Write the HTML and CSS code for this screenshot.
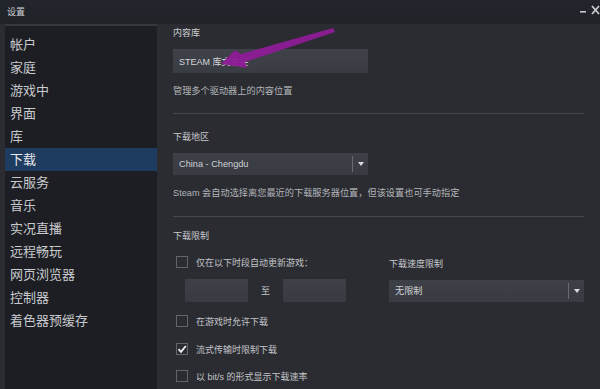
FILE: index.html
```html
<!DOCTYPE html>
<html lang="zh-CN">
<head>
    <meta charset="UTF-8">
    <meta name="viewport" content="width=device-width, initial-scale=1.0">
    <title>设置</title>
    <link rel="stylesheet" href="styles.css">
</head>
<body>
    <div class="window">
        <header class="titlebar">
            <span class="title">设置</span>
            <div class="controls">
                <svg width="7" height="10" viewBox="0 0 7 10"><rect x="0" y="6" width="6" height="1.6" fill="#c9cbcf"/></svg>
                <svg width="9" height="10" viewBox="0 0 9 10"><path d="M1 1 L8 9 M8 1 L1 9" stroke="#c9cbcf" stroke-width="1.8"/></svg>
            </div>
        </header>

        <div class="layout">
            <nav class="sidebar">
                <a class="nav-item">帐户</a>
                <a class="nav-item">家庭</a>
                <a class="nav-item">游戏中</a>
                <a class="nav-item">界面</a>
                <a class="nav-item">库</a>
                <a class="nav-item active">下载</a>
                <a class="nav-item">云服务</a>
                <a class="nav-item">音乐</a>
                <a class="nav-item">实况直播</a>
                <a class="nav-item">远程畅玩</a>
                <a class="nav-item">网页浏览器</a>
                <a class="nav-item">控制器</a>
                <a class="nav-item">着色器预缓存</a>
            </nav>

            <main class="content">
                <section>
                    <div class="label">内容库</div>
                    <button class="btn">STEAM 库文件夹</button>
                    <p class="hint">管理多个驱动器上的内容位置</p>
                </section>

                <hr class="sep">

                <section>
                    <div class="label section-label">下载地区</div>
                    <div class="select">
                        <span>China - Chengdu</span>
                        <span class="caret"></span>
                    </div>
                    <p class="hint">Steam 会自动选择离您最近的下载服务器位置，但该设置也可手动指定</p>
                </section>

                <hr class="sep sep-2">

                <section>
                    <div class="label label-limit">下载限制</div>
                    <div class="limits">
                        <div class="limits-left">
                            <label class="check"><span class="box"></span>仅在以下时段自动更新游戏：</label>
                            <div class="times">
                                <span class="time-box"></span>
                                <span class="to">至</span>
                                <span class="time-box"></span>
                            </div>
                        </div>
                        <div class="limits-right">
                            <div class="label speed-label">下载速度限制</div>
                            <div class="select">
                                <span>无限制</span>
                                <span class="caret"></span>
                            </div>
                        </div>
                    </div>
                    <label class="check row-first"><span class="box"></span>在游戏时允许下载</label>
                    <label class="check row"><span class="box checked">
                        <svg width="10" height="10" viewBox="0 0 10 10"><path d="M1.5 5.2 L4 7.8 L8.8 2" fill="none" stroke="#f2f2f2" stroke-width="1.8"/></svg>
                    </span>流式传输时限制下载</label>
                    <label class="check row row-last"><span class="box"></span>以 bit/s 的形式显示下载速率</label>
                </section>
            </main>
        </div>

        <!-- annotation arrow drawn over the screenshot -->
        <svg class="annotation" width="600" height="389" viewBox="0 0 600 389">
            <polygon points="221,64 235,50 241,54 333,28 335,32 245,62 247,68" fill="#8d1b96" opacity="0.95"/>
        </svg>
    </div>
</body>
</html>
```

FILE: styles.css
```css
* {
    margin: 0;
    padding: 0;
    box-sizing: border-box;
}

body {
    background: #2a2c31;
    color: #c6c8cc;
    font-family: "Liberation Sans", "Noto Sans CJK SC", sans-serif;
    overflow: hidden;
}

.window {
    position: relative;
    width: 600px;
    height: 389px;
    display: flex;
    flex-direction: column;
    overflow: hidden;
}

.titlebar {
    flex-shrink: 0;
    height: 24px;
    background: linear-gradient(#22252c, #1f2227);
    display: flex;
    justify-content: space-between;
    align-items: center;
    padding: 0 0 2px 7px;
}

.title {
    font-size: 9px;
    color: #d0d2d6;
}

.controls {
    display: flex;
    align-items: center;
    gap: 4px;
    margin-bottom: 3px;
}

.layout {
    flex: 1;
    min-height: 0;
    display: flex;
}

.sidebar {
    width: 152px;
    margin-left: 5px;
    background: #1c1e23;
    border-top: 2px solid #35383e;
    padding-top: 7px;
    display: flex;
    flex-direction: column;
}

.nav-item {
    height: 23px;
    line-height: 23px;
    padding-left: 5px;
    font-size: 13px;
    color: #c8cace;
}

.nav-item.active {
    background: #1e3c5f;
    color: #e6e8ec;
}

.content {
    flex: 1;
    padding: 2px 16px 0 16px;
}

.label {
    font-size: 9px;
    line-height: 14px;
    color: #c8cace;
}

.section-label {
    margin-top: 16px;
}

.label-limit {
    margin-top: 12px;
}

.btn {
    display: block;
    margin-top: 9px;
    width: 195px;
    height: 24px;
    border: none;
    background: linear-gradient(#3f4249, #393c43);
    color: #d4d6da;
    font-family: inherit;
    font-size: 9px;
    text-align: left;
    padding-left: 6px;
}

.hint {
    margin-top: 11px;
    font-size: 9.2px;
    line-height: 14px;
    color: #b3b5b9;
}

.sep {
    margin-top: 15px;
    border: none;
    height: 1px;
    background: #44474d;
}

.sep-2 {
    margin-top: 16px;
}

.select {
    position: relative;
    margin-top: 9px;
    width: 195px;
    height: 22px;
    background: linear-gradient(#3d4047, #383b42);
    font-size: 9.2px;
    line-height: 22px;
    padding-left: 6px;
    color: #d0d2d6;
}

.caret {
    position: absolute;
    right: 0;
    top: 3px;
    width: 16px;
    height: 16px;
    border-left: 1px solid #686b71;
}

.caret::after {
    content: "";
    position: absolute;
    left: 5px;
    top: 6px;
    border-left: 3px solid transparent;
    border-right: 3px solid transparent;
    border-top: 4px solid #d8dadd;
}

.limits {
    margin-top: 12px;
    display: grid;
    grid-template-columns: 216px 195px;
}

.speed-label {
    margin-top: 2px;
}

.check {
    display: flex;
    align-items: center;
    gap: 8px;
    height: 14px;
    padding-left: 3px;
    font-size: 9px;
    color: #c3c5c9;
}

.box {
    width: 12px;
    height: 12px;
    border: 1px solid #62656b;
    display: flex;
    align-items: center;
    justify-content: center;
}

.times {
    margin-top: 10px;
    margin-left: 12px;
    display: flex;
    align-items: center;
}

.time-box {
    width: 63px;
    height: 23px;
    background: linear-gradient(#3d4047, #383b42);
}

.to {
    width: 35px;
    text-align: center;
    font-size: 9px;
    color: #c3c5c9;
}

.row-first {
    margin-top: 12px;
}

.row {
    margin-top: 14px;
}

.row-last {
    margin-top: 13px;
}

.annotation {
    position: absolute;
    left: 0;
    top: 0;
    pointer-events: none;
}
```
